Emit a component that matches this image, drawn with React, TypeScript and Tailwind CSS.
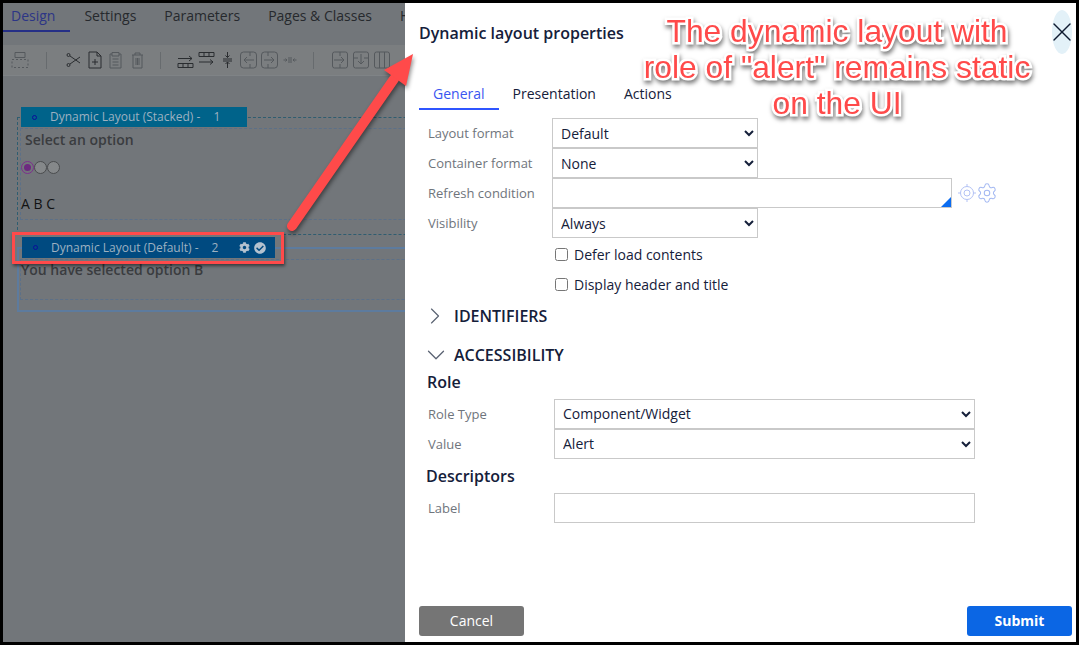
import { FaCheckCircle, FaCog } from 'react-icons/fa'
import { ChevronDown, ChevronRight, Settings, X } from 'lucide-react'

// toolbar glyphs, drawn on a 16x16 or so grid
function Ico({ w, ml, dark, children }: { w: number; ml: number; dark?: boolean; children: React.ReactNode }) {
  return (
    <svg
      width={w}
      height={18}
      viewBox={`0 0 ${w} 18`}
      fill="none"
      stroke={dark ? '#2a2d30' : '#55595d'}
      strokeWidth={1}
      style={{ marginLeft: ml }}
      className="shrink-0"
    >
      {children}
    </svg>
  )
}

function Toolbar() {
  return (
    <div className="mt-[13px] flex h-[31px] items-center border-b border-[#7f8386] bg-[#7b7e80] pl-[8px]">
      <Ico w={18} ml={0}>
        <path d="M4 1.5h10v5H4z" />
        <path d="M1 8.5h16v8H1z" strokeDasharray="2 2" />
      </Ico>
      <div className="ml-[17px] h-[17px] w-px bg-[#676b6e]" />
      <Ico w={15} ml={19} dark>
        <circle cx="2.5" cy="4" r="1.5" />
        <circle cx="2.5" cy="14" r="1.5" />
        <path d="M4 5l10 7M4 13L14 6" />
      </Ico>
      <Ico w={14} ml={7} dark>
        <path d="M1 1h8l4 4v12H1z" />
        <path d="M9 1v4h4M7 8v6M4 11h6" />
      </Ico>
      <Ico w={13} ml={7}>
        <path d="M3 3H1v14h11V3h-2M3 1.5h7V5H3zM3.5 8h6M3.5 11h6M3.5 14h6" />
      </Ico>
      <Ico w={13} ml={9}>
        <path d="M1 4h11M4 4V2h5v2M2 4v13h9V4M5 7v7M6.5 7v7M8 7v7" />
      </Ico>
      <div className="ml-[16px] h-[17px] w-px bg-[#676b6e]" />
      <Ico w={17} ml={16} dark>
        <path d="M1 12.5h15v4H1zM6 12.5v4M11 12.5v4M1 7.5h14M12 5l3 2.5L12 10" />
      </Ico>
      <Ico w={17} ml={4} dark>
        <path d="M1 1.5h15v4H1zM6 1.5v4M11 1.5v4M1 11h14M12 8.5l3 2.5-3 2.5" />
      </Ico>
      <Ico w={11} ml={7} dark>
        <path d="M5.5 1v5.5M3.5 4.5l2 2 2-2M1 8h9M1 10h9M5.5 17v-6M3.5 13l2-2 2 2" />
      </Ico>
      <Ico w={17} ml={7}>
        <rect x="0.5" y="1" width="16" height="16" rx="3" />
        <path d="M10 1v4M10 13v4M14 9H4M7 6L4 9l3 3" />
      </Ico>
      <Ico w={17} ml={4}>
        <rect x="0.5" y="1" width="16" height="16" rx="3" />
        <path d="M7 1v4M7 13v4M3 9h10M10 6l3 3-3 3" />
      </Ico>
      <Ico w={14} ml={5}>
        <path d="M6 6v6M8 6v6M0.5 9H4M2.5 7.5L4 9l-1.5 1.5M13.5 9H10M11.5 7.5L10 9l1.5 1.5" />
      </Ico>
      <div className="ml-[16px] h-[17px] w-px bg-[#676b6e]" />
      <Ico w={16} ml={18}>
        <rect x="0.5" y="1" width="15" height="16" rx="2" />
        <path d="M2 9h10M9 6l3 3-3 3M8 1v4M8 13v4" />
      </Ico>
      <Ico w={16} ml={5}>
        <rect x="0.5" y="1" width="15" height="16" rx="2" />
        <path d="M8 3v10M5 10l3 3 3-3M1 7h4M11 7h4" />
      </Ico>
      <Ico w={16} ml={5}>
        <rect x="0.5" y="1" width="15" height="16" rx="2" />
        <path d="M5.5 1v16M10.5 1v16" />
      </Ico>
    </div>
  )
}

function Tabs() {
  return (
    <div className="flex h-[29px] text-[14px] whitespace-nowrap text-[#26292d]">
      <div className="mr-[14px] border-b-2 border-[#252f86] pr-[15px] pl-[8px] leading-[25px] text-[#2c3586]">Design</div>
      <div className="mr-[28px] leading-[25px]">Settings</div>
      <div className="mr-[28px] leading-[25px]">Parameters</div>
      <div className="mr-[28px] leading-[25px]">Pages &amp; Classes</div>
      <div className="leading-[25px]">H</div>
    </div>
  )
}

function LayoutBar({ bg, label, num, top, width, h, children }: {
  bg: string
  label: string
  num: string
  top: number
  width: number
  h: number
  children?: React.ReactNode
}) {
  return (
    <div
      style={{ backgroundColor: bg, width, height: h, top }}
      className="absolute left-[3px] flex items-center pl-[11px] text-[12px] whitespace-nowrap text-[#9db1c1]"
    >
      <span className="h-[5px] w-[5px] rounded-full border border-[#0a0f9a]" />
      <span className="ml-[13px]">{label}</span>
      <span className="ml-[13px]">{num}</span>
      {children}
    </div>
  )
}

function DesignPane() {
  return (
    <div className="w-[402px] shrink-0 overflow-hidden bg-[#72767a] font-['Open_Sans',sans-serif]">
      <Tabs />
      <Toolbar />
      <div className="ml-[14px] w-[500px] pt-[41px]">
        <div className="relative h-[118px] border border-dashed border-[#2f5d70] pt-[10px] pl-[2px]">
          <LayoutBar bg="#00638a" label="Dynamic Layout (Stacked) -" num="1" top={-11} width={226} h={20} />
          <div className="h-[92px] border border-dashed border-[#5c7088]">
            <div className="pl-[4px] text-[14px] leading-[22px] font-semibold text-[#3a3c3f]">Select an option</div>
            <div className="mt-[10px] flex">
              <span className="flex h-[13px] w-[13px] items-center justify-center rounded-full border border-[#7d2f8e]">
                <span className="h-[7px] w-[7px] rounded-full bg-[#6d2a80]" />
              </span>
              <span className="h-[13px] w-[13px] rounded-full border border-[#4a4c4e] bg-[#85888a]" />
              <span className="h-[13px] w-[13px] rounded-full border border-[#4a4c4e] bg-[#85888a]" />
            </div>
            <div className="mt-[20px] text-[14px] leading-[20px] text-[#111214]">A B C</div>
          </div>
        </div>
        <div className="relative mt-[12px] h-[65px] border-2 border-[#5d7b9e] pt-[10px] pl-[1px]">
          <LayoutBar bg="#004a80" label="Dynamic Layout (Default) -" num="2" top={-12} width={253} h={21}>
            <FaCog className="ml-[21px] text-[11px] text-[#b4c2cf]" />
            <FaCheckCircle className="ml-[4px] text-[12px] text-[#b4c2cf]" />
          </LayoutBar>
          <div className="h-[41px] border border-dashed border-[#5c7088] text-[14px] leading-[19px] font-semibold text-[#3a3c3f]">
            You have selected option B
          </div>
          <div className="absolute top-[-17px] left-[-7px] h-[32px] w-[272px] border-[3px] border-[#ff4a4a] shadow-[1px_2px_3px_rgba(0,0,0,0.5)]" />
        </div>
      </div>
    </div>
  )
}

function Label({ children, w = 133 }: { children: React.ReactNode; w?: number }) {
  return (
    <div style={{ width: w }} className="shrink-0 pt-px pl-[9px] text-[13px] text-[#6f757c]">
      {children}
    </div>
  )
}

function SelectBox({ value, wide }: { value: string; wide?: boolean }) {
  return (
    <select
      defaultValue={value}
      className={`border border-[#c9c9c9] bg-white pl-[4px] text-[14px] text-[#15203a] outline-none ${wide ? 'h-[30px] w-[421px] pb-[2px]' : 'h-[30px] w-[206px]'}`}
    >
      <option>{value}</option>
    </select>
  )
}

function Row({ label, w, children }: { label: string; w?: number; children: React.ReactNode }) {
  return (
    <div className="flex h-[30px] items-center">
      <Label w={w}>{label}</Label>
      {children}
    </div>
  )
}

function Check({ label }: { label: string }) {
  return (
    <label className="flex h-[30px] items-center pb-[2px] pl-[136px] text-[14px] text-[#15203a]">
      <input type="checkbox" className="m-0 h-[13px] w-[13px]" />
      <span className="ml-[6px]">{label}</span>
    </label>
  )
}

function PropertiesPanel() {
  return (
    <div className="relative flex flex-1 flex-col bg-white pl-[14px] font-['Open_Sans',sans-serif]">
      <div className="mt-[18px] text-[16px] leading-[24px] font-semibold text-[#15203a]">Dynamic layout properties</div>
      <div className="absolute top-[7px] right-[4px] flex h-[44px] w-[20px] items-center justify-center rounded-[50%] bg-[#e3f1f8]">
        <X className="h-[32px] w-[32px] shrink-0 text-[#0f1a30]" strokeWidth={1} />
      </div>

      <div className="mt-[34px] flex h-[31px] text-[14px] leading-[29px] text-[#15203a]">
        <div className="border-b-2 border-[#2f55ff] px-[14px] text-[#3a56f0]">General</div>
        <div className="px-[14px]">Presentation</div>
        <div className="px-[14px]">Actions</div>
      </div>

      <div className="mt-[8px]">
        <Row label="Layout format"><SelectBox value="Default" /></Row>
        <Row label="Container format"><SelectBox value="None" /></Row>
        <Row label="Refresh condition">
          <div className="relative h-[30px] w-[400px] border border-[#c9c9c9]">
            <div className="absolute right-0 bottom-0 h-0 w-0 border-b-[10px] border-l-[10px] border-b-[#0b6cf0] border-l-transparent" />
          </div>
          <svg width="18" height="18" viewBox="0 0 18 18" fill="none" stroke="#b3c2f5" className="ml-[6px] shrink-0">
            <circle cx="9" cy="9" r="6.5" />
            <circle cx="9" cy="9" r="3" />
            <path d="M9 0v2.5M9 15.5V18M0 9h2.5M15.5 9H18" />
          </svg>
          <Settings className="h-[22px] w-[22px] shrink-0 text-[#a3b8f2]" strokeWidth={1.1} />
        </Row>
        <Row label="Visibility"><SelectBox value="Always" /></Row>
      </div>

      <div className="mt-[2px]">
        <Check label="Defer load contents" />
        <Check label="Display header and title" />
      </div>

      <div className="mt-[4px] flex h-[24px] items-center text-[16px] font-semibold text-[#15203a]">
        <ChevronRight className="ml-[2px] h-[28px] w-[28px] shrink-0 text-[#5a6272]" strokeWidth={1} />
        <span className="ml-[5px]">IDENTIFIERS</span>
      </div>
      <div className="mt-[15px] flex h-[24px] items-center text-[16px] font-semibold text-[#15203a]">
        <ChevronDown className="ml-[2px] h-[30px] w-[30px] shrink-0 text-[#5a6272]" strokeWidth={1} />
        <span className="ml-[3px]">ACCESSIBILITY</span>
      </div>

      <div className="mt-[3px] pl-[8px] text-[16px] leading-[24px] font-semibold text-[#15203a]">Role</div>
      <div className="mt-[5px]">
        <Row label="Role Type" w={135}><SelectBox value="Component/Widget" wide /></Row>
        <Row label="Value" w={135}><SelectBox value="Alert" wide /></Row>
      </div>
      <div className="mt-[5px] pl-[7px] text-[16px] leading-[24px] font-semibold text-[#15203a]">Descriptors</div>
      <div className="mt-[5px]">
        <Row label="Label" w={135}>
          <div className="h-[30px] w-[421px] border border-[#c9c9c9]" />
        </Row>
      </div>

      <div className="mt-auto flex justify-between pr-[4px] pb-[6px]">
        <button className="h-[30px] w-[105px] rounded-[3px] bg-[#757575] pb-[2px] text-[14px] text-white">Cancel</button>
        <button className="h-[30px] w-[105px] rounded-[3px] bg-[#0b66e4] pb-[2px] text-[14px] font-bold text-white">Submit</button>
      </div>
    </div>
  )
}

export default function App() {
  return (
    <div className="relative box-border flex h-[645px] w-[1079px] overflow-hidden border-[3px] border-black">
      <DesignPane />
      <PropertiesPanel />

      {/* callout arrow drawn on top of both panes */}
      <svg
        width="1073"
        height="639"
        viewBox="3 3 1073 639"
        className="pointer-events-none absolute top-0 left-0 drop-shadow-[1px_3px_2px_rgba(0,0,0,0.45)]"
      >
        <path d="M292 226L394 79" stroke="#ff4a4a" strokeWidth="10" strokeLinecap="round" />
        <path d="M413 54L384 70L406 86Z" fill="#ff4a4a" />
      </svg>

      {/* annotation */}
      <div className="absolute top-[10px] left-[627px] w-[414px] text-center font-['Liberation_Sans',sans-serif] text-[31.8px] leading-[36px] text-[#ff4a4a] [-webkit-text-stroke:5px_white] [paint-order:stroke_fill] drop-shadow-[1px_3px_2px_rgba(0,0,0,0.5)]">
        The dynamic layout with
        <br />
        role of "alert" remains static
        <br />
        on the UI
      </div>
    </div>
  )
}
